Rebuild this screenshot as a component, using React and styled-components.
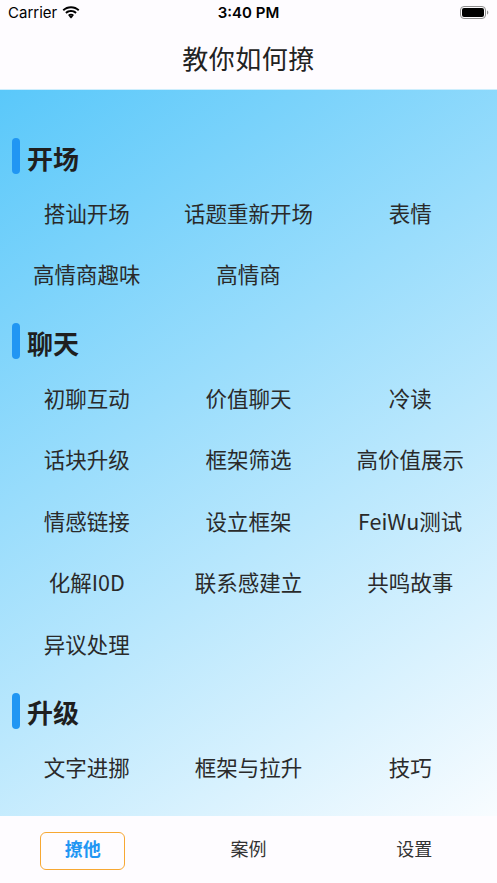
import React from "react";
import styled, { createGlobalStyle } from "styled-components";

const Global = createGlobalStyle`
  html, body { margin: 0; padding: 0; }
  body { font-family: "Noto Sans CJK SC", "Noto Sans", sans-serif; background: #fefcff; }
  * { box-sizing: border-box; }
`;

const Screen = styled.div`
  width: 497px;
  height: 883px;
  display: flex;
  flex-direction: column;
  overflow: hidden;
  background: #fefcff;
`;

const StatusBar = styled.div`
  height: 26px;
  display: grid;
  grid-template-columns: 1fr auto 1fr;
  align-items: center;
  padding: 0 8px;
  font-family: Inter, "Noto Sans", sans-serif;
  font-size: 15px;
  color: #000;
`;

const Carrier = styled.div`
  display: flex;
  align-items: center;
  gap: 5px;
  font-weight: 400;
`;

const Time = styled.div`
  font-weight: 600;
`;

const BatteryWrap = styled.div`
  display: flex;
  justify-content: flex-end;
`;

const NavBar = styled.div`
  height: 66px;
  display: flex;
  align-items: center;
  justify-content: center;
  font-size: 26px;
  color: #222;
  letter-spacing: 0.5px;
  border-bottom: 1px solid #cdeefd;
`;

const Content = styled.div`
  flex: 1;
  background: linear-gradient(145.5deg, #5ac8fa 0%, #f8fcff 100%);
  padding-top: 48px;
  display: flex;
  flex-direction: column;
`;

const Section = styled.div`
  display: flex;
  flex-direction: column;
  margin-bottom: 20px;
`;

const Header = styled.div`
  height: 36px;
  display: flex;
  align-items: center;
  gap: 7px;
  padding-left: 12px;
  margin-bottom: 6px;
`;

const Bar = styled.div`
  width: 8px;
  height: 36px;
  border-radius: 4px;
  background: #2196f3;
`;

const HeaderText = styled.div`
  font-size: 26px;
  font-weight: 700;
  color: #1f1f1f;
  padding-top: 2px;
`;

const Grid = styled.div`
  display: grid;
  grid-template-columns: repeat(3, 1fr);
  grid-auto-rows: 61.5px;
  padding: 0 6px;
`;

const Item = styled.div`
  display: flex;
  align-items: center;
  justify-content: center;
  font-size: 21.5px;
  color: #2a2a2a;
  white-space: nowrap;
  padding-top: 3px;
`;

const TabBar = styled.div`
  height: 68px;
  display: grid;
  grid-template-columns: repeat(3, 1fr);
  padding-top: 16px;
  align-items: start;
  justify-items: center;
  background: #fefcff;
`;

const Tab = styled.div`
  width: 85px;
  height: 38px;
  display: flex;
  align-items: center;
  justify-content: center;
  font-size: 18px;
  line-height: 1;
  padding-bottom: 6px;
  border-radius: 6px;
  border: 1.5px solid ${(p) => (p.$active ? "#f7a833" : "transparent")};
  color: ${(p) => (p.$active ? "#2196f3" : "#333")};
  font-weight: ${(p) => (p.$active ? 700 : 400)};
`;

const sections = [
  { title: "开场", items: ["搭讪开场", "话题重新开场", "表情", "高情商趣味", "高情商"] },
  {
    title: "聊天",
    items: [
      "初聊互动", "价值聊天", "冷读",
      "话块升级", "框架筛选", "高价值展示",
      "情感链接", "设立框架", "FeiWu测试",
      "化解I0D", "联系感建立", "共鸣故事",
      "异议处理",
    ],
  },
  { title: "升级", items: ["文字进挪", "框架与拉升", "技巧"] },
];

const Wifi = () => (
  <svg width="18" height="13" viewBox="0 0 18 13">
    <path d="M9 2.2c2.7 0 5.2 1 7.1 2.8l1.3-1.4C15.1 1.4 12.2.2 9 .2S2.9 1.4.6 3.6l1.3 1.4C3.8 3.2 6.3 2.2 9 2.2z" fill="#000" />
    <path d="M9 6c1.7 0 3.2.6 4.4 1.7l1.3-1.4C13.2 4.9 11.2 4 9 4S4.8 4.9 3.3 6.3l1.3 1.4C5.8 6.6 7.3 6 9 6z" fill="#000" />
    <path d="M9 9.6c.8 0 1.5.3 2 .8L9 12.6l-2-2.2c.5-.5 1.2-.8 2-.8z" fill="#000" />
    <path d="M9 7.8c1.2 0 2.2.4 3 1.1l-1.2 1.3C10.3 9.7 9.7 9.5 9 9.5s-1.3.2-1.8.7L6 8.9c.8-.7 1.8-1.1 3-1.1z" fill="#000" />
  </svg>
);

const Battery = () => (
  <svg width="29" height="13" viewBox="0 0 29 13">
    <rect x="0.5" y="0.5" width="25" height="12" rx="3.5" fill="none" stroke="#8e8e8e" />
    <rect x="2" y="2" width="22" height="9" rx="2" fill="#000" />
    <path d="M27 4.5v4c.8-.3 1.3-1.1 1.3-2s-.5-1.7-1.3-2z" fill="#8e8e8e" />
  </svg>
);

export default function App() {
  return (
    <Screen>
      <Global />
      <StatusBar>
        <Carrier>
          Carrier <Wifi />
        </Carrier>
        <Time>3:40 PM</Time>
        <BatteryWrap>
          <Battery />
        </BatteryWrap>
      </StatusBar>
      <NavBar>教你如何撩</NavBar>
      <Content>
        {sections.map((s) => (
          <Section key={s.title}>
            <Header>
              <Bar />
              <HeaderText>{s.title}</HeaderText>
            </Header>
            <Grid>
              {s.items.map((it) => (
                <Item key={it}>{it}</Item>
              ))}
            </Grid>
          </Section>
        ))}
      </Content>
      <TabBar>
        <Tab $active>撩他</Tab>
        <Tab>案例</Tab>
        <Tab>设置</Tab>
      </TabBar>
    </Screen>
  );
}
